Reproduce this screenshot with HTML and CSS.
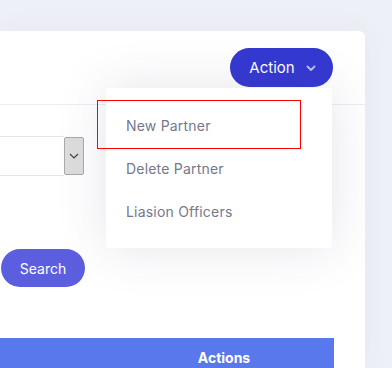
FILE: index.html
```html
<!DOCTYPE html>
<html>
<head>
<meta charset="utf-8">
<link rel="stylesheet" href="styles.css">
</head>
<body>
<div class="page">
  <div class="card">
    <div class="card-header">
      <div class="dropdown">
        <button class="btn-action">Action
          <svg class="chev" width="10" height="7" viewBox="0 0 10 7"><path d="M1.5 1.5 L5 5 L8.5 1.5" fill="none" stroke="currentColor" stroke-width="2" stroke-linecap="round" stroke-linejoin="round"/></svg>
        </button>
        <div class="menu">
          <div class="menu-item">New Partner</div>
          <div class="menu-item">Delete Partner</div>
          <div class="menu-item">Liasion Officers</div>
        </div>
        <div class="highlight"></div>
      </div>
    </div>
    <div class="card-body">
      <div class="select">
        <div class="select-field"></div>
        <div class="select-arrow">
          <svg width="10" height="6" viewBox="0 0 10 6"><path d="M1 1 L5 5 L9 1" fill="none" stroke="#444" stroke-width="1.2"/></svg>
        </div>
      </div>
      <button class="btn-search">Search</button>
      <div class="table-head">
        <div class="th-spacer"></div>
        <div class="th">Actions</div>
      </div>
    </div>
  </div>
</div>
</body>
</html>
```
FILE: styles.css
```css
html, body {
  margin: 0;
  padding: 0;
  background: #eef0f7;
  font-family: Inter, "Open Sans", sans-serif;
  overflow: hidden;
}
.page {
  padding-top: 31px;
  width: 365px;
}
.card {
  background: #fff;
  border-radius: 0 6px 0 0;
  height: 337px;
  overflow: hidden;
  box-shadow: 0 0 30px rgba(82, 63, 105, 0.05);
}
.card-header {
  height: 74px;
  border-bottom: 1px solid #ebedf3;
  display: flex;
  justify-content: flex-end;
  align-items: flex-start;
  padding-right: 32px;
  box-sizing: border-box;
  padding-top: 17px;
}
.dropdown {
  position: relative;
}
.btn-action {
  height: 39px;
  width: 103px;
  border: none;
  border-radius: 20px;
  background: #3439d1;
  color: #fff;
  font-family: inherit;
  font-size: 15px;
  display: flex;
  align-items: center;
  justify-content: center;
  gap: 11px;
  padding: 0 0 0 2px;
}
.chev {
  color: #b9bbf0;
  margin-top: 1px;
}
.menu {
  position: absolute;
  top: 40px;
  right: 1px;
  width: 226px;
  background: #fff;
  padding: 16px 0 15px;
  box-shadow: 0 0 50px 0 rgba(82, 63, 105, 0.15);
  border-radius: 4px;
  z-index: 2;
}
.menu-item {
  height: 43px;
  line-height: 43px;
  padding-left: 20px;
  font-size: 14px;
  color: #74788d;
  letter-spacing: 0.2px;
}
.highlight {
  position: absolute;
  top: 52px;
  left: -133px;
  width: 202px;
  height: 47px;
  border: 1px solid #f00;
  z-index: 3;
}
.card-body {
  padding: 31px 31px 0 0;
  display: flex;
  flex-direction: column;
  align-items: flex-start;
}
.select {
  display: flex;
  width: 84px;
  height: 40px;
  box-sizing: border-box;
}
.select-field {
  flex: 1;
  border: 1px solid #e4e6ef;
  border-right: none;
  border-left: none;
}
.select-arrow {
  width: 20px;
  background: #dddddd;
  border: 1px solid #a9a9a9;
  border-radius: 2px;
  display: flex;
  align-items: center;
  justify-content: center;
  box-sizing: border-box;
  margin: 1px 0;
}
.btn-search {
  margin-top: 73px;
  margin-left: 1px;
  width: 84px;
  height: 38px;
  border: none;
  border-radius: 19px;
  background: #5b5fdf;
  color: #fff;
  font-family: inherit;
  font-size: 14px;
  padding: 0;
}
.table-head {
  margin-top: 51px;
  align-self: stretch;
  height: 40px;
  background: #5878eb;
  display: flex;
}
.th-spacer {
  flex: 1;
}
.th {
  width: 220px;
  text-align: center;
  color: #fff;
  font-weight: 700;
  font-size: 14px;
  line-height: 40px;
}
```
